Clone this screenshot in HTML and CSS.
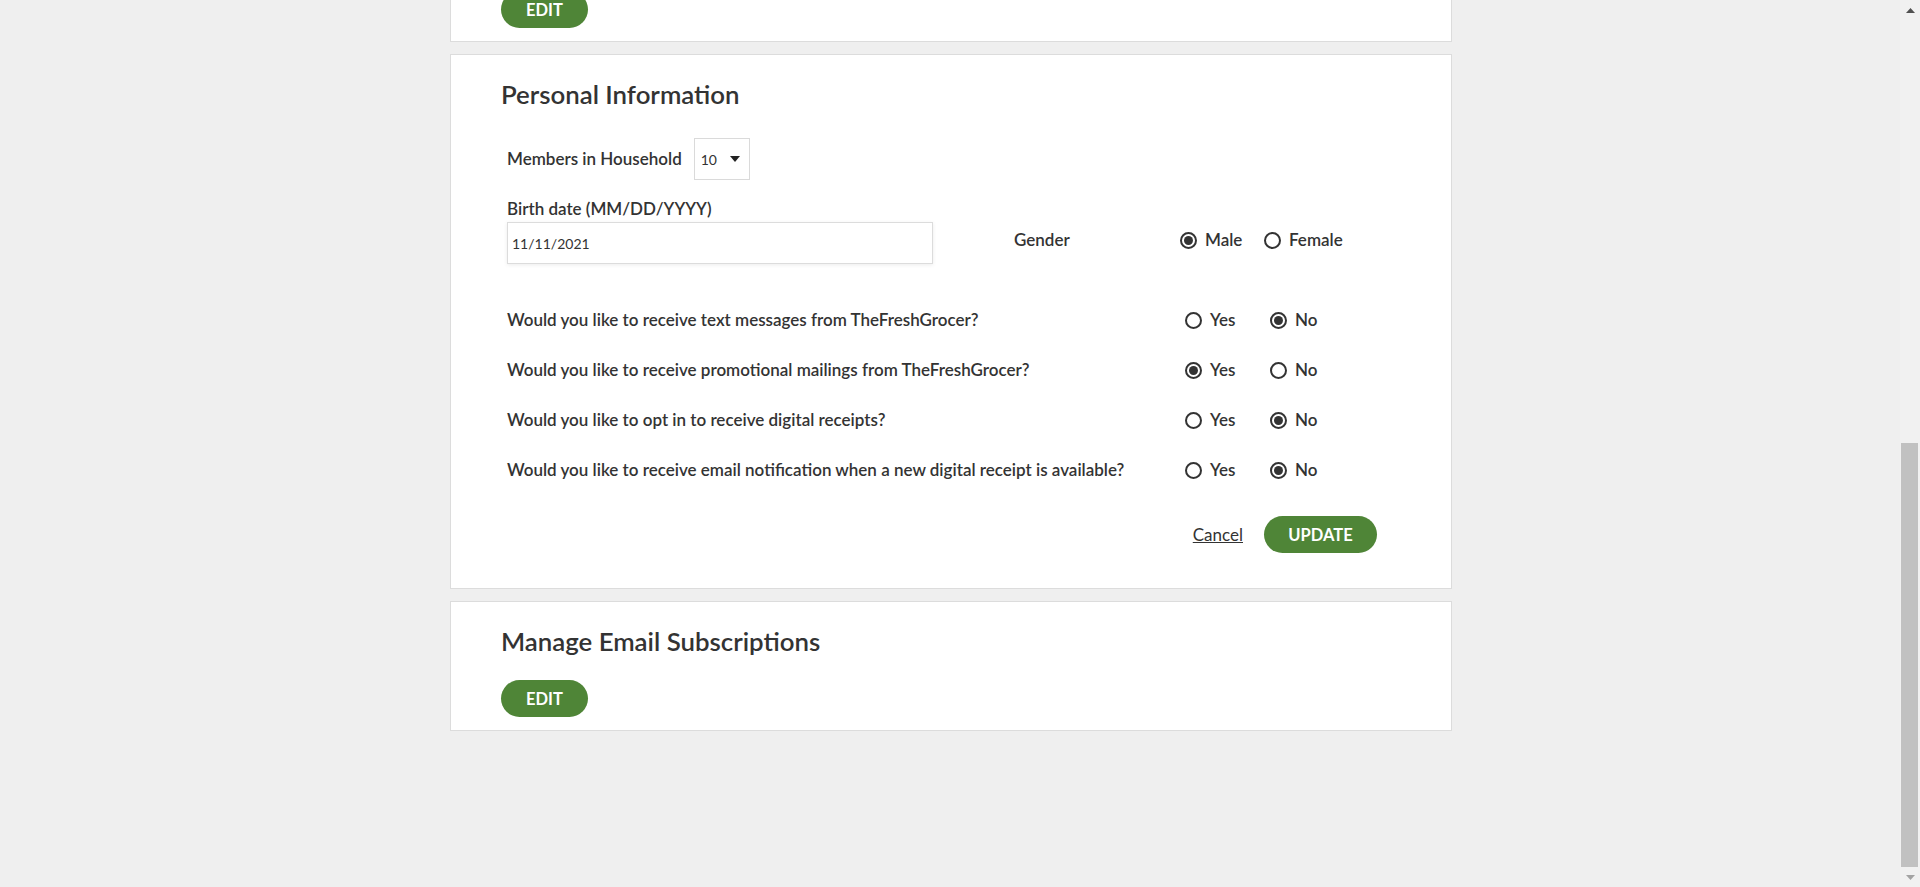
FILE: index.html
```html
<!DOCTYPE html>
<html lang="en">
<head>
<meta charset="utf-8">
<title>Account - Personal Information</title>
<link rel="stylesheet" href="styles.css">
</head>
<body>
<div class="screen">
  <main class="page">
    <section class="card card--clipped">
      <button class="btn btn--edit" type="button">EDIT</button>
    </section>

    <section class="card card--form">
      <h2 class="card-title">Personal Information</h2>
      <form class="form">
        <div class="household">
          <span class="field-label">Members in Household</span>
          <div class="select">
            <span class="select-value">10</span>
            <svg class="select-caret" width="10" height="6" viewBox="0 0 10 6"><path d="M0 0H10L5 6Z" fill="#222"/></svg>
          </div>
        </div>

        <div class="birth-row">
          <div class="birth-field">
            <span class="field-label">Birth date (MM/DD/YYYY)</span>
            <div class="text-input">11/11/2021</div>
          </div>
          <div class="gender">
            <span class="field-label gender-label">Gender</span>
            <span class="radio-option radio-option--gender"><span class="radio is-checked"></span>Male</span>
            <span class="radio-option radio-option--gender"><span class="radio"></span>Female</span>
          </div>
        </div>

        <div class="questions">
          <div class="question">
            <span class="field-label question-text">Would you like to receive text messages from TheFreshGrocer?</span>
            <span class="radio-option"><span class="radio"></span>Yes</span>
            <span class="radio-option"><span class="radio is-checked"></span>No</span>
          </div>
          <div class="question">
            <span class="field-label question-text">Would you like to receive promotional mailings from TheFreshGrocer?</span>
            <span class="radio-option"><span class="radio is-checked"></span>Yes</span>
            <span class="radio-option"><span class="radio"></span>No</span>
          </div>
          <div class="question">
            <span class="field-label question-text">Would you like to opt in to receive digital receipts?</span>
            <span class="radio-option"><span class="radio"></span>Yes</span>
            <span class="radio-option"><span class="radio is-checked"></span>No</span>
          </div>
          <div class="question">
            <span class="field-label question-text">Would you like to receive email notification when a new digital receipt is available?</span>
            <span class="radio-option"><span class="radio"></span>Yes</span>
            <span class="radio-option"><span class="radio is-checked"></span>No</span>
          </div>
        </div>

        <div class="actions">
          <a class="cancel-link" href="#">Cancel</a>
          <button class="btn btn--update" type="button">UPDATE</button>
        </div>
      </form>
    </section>

    <section class="card">
      <h2 class="card-title">Manage Email Subscriptions</h2>
      <button class="btn btn--edit btn--after-title" type="button">EDIT</button>
    </section>
  </main>

  <div class="scrollbar">
    <div class="scroll-btn">
      <svg width="9" height="5" viewBox="0 0 9 5"><path d="M0 5L4.5 0L9 5Z" fill="#505050"/></svg>
    </div>
    <div class="scroll-track">
      <div class="scroll-thumb"></div>
    </div>
    <div class="scroll-btn">
      <svg width="9" height="5" viewBox="0 0 9 5"><path d="M0 0H9L4.5 5Z" fill="#a3a3a3"/></svg>
    </div>
  </div>
</div>
</body>
</html>
```

FILE: styles.css
```css
html, body {
  margin: 0;
  padding: 0;
}

body {
  font-family: "Lato", "Noto Sans", sans-serif;
  color: #333;
  background: #efefef;
}

.screen {
  display: flex;
  height: 100vh;
  overflow: hidden;
  background: #efefef;
}

.page {
  flex: 1;
  display: flex;
  flex-direction: column;
  align-items: center;
  gap: 12px;
  padding-left: 2px;
}

.card {
  flex-shrink: 0;
  box-sizing: border-box;
  width: 1002px;
  background: #fff;
  border: 1px solid #dcdcdc;
  padding: 0 50px 13px;
}

.card--clipped {
  margin-top: -10px;
}

.card-title {
  margin: 0;
  padding-top: 24px;
  font-size: 25.8px;
  line-height: 30px;
  font-weight: 600;
  color: #333;
}

.btn {
  display: block;
  box-sizing: border-box;
  height: 37px;
  border: 0;
  border-radius: 19px;
  background: #4f8537;
  color: #fff;
  font-family: "Lato", "Noto Sans", sans-serif;
  font-size: 16.5px;
  font-weight: 700;
  padding: 0;
  cursor: pointer;
}

.btn--edit {
  width: 87px;
}

.btn--update {
  width: 113px;
}

.btn--after-title {
  margin-top: 24px;
}

.form {
  margin: 29px 0 0 6px;
}

.field-label {
  font-size: 17px;
  line-height: 20px;
  font-weight: 600;
  color: #333;
}

.household {
  display: flex;
  align-items: center;
  gap: 12px;
}

.select {
  box-sizing: border-box;
  width: 56px;
  height: 42px;
  border: 1px solid #dadada;
  display: flex;
  align-items: center;
  padding-left: 6px;
  gap: 13px;
}

.select-value {
  font-size: 14px;
  color: #333;
}

.birth-row {
  margin-top: 19px;
  display: flex;
  align-items: flex-end;
}

.birth-field {
  display: flex;
  flex-direction: column;
  gap: 3px;
}

.text-input {
  box-sizing: border-box;
  width: 426px;
  height: 42px;
  border: 1px solid #dcdcdc;
  box-shadow: 0 1px 4px rgba(0, 0, 0, 0.08);
  padding-left: 4px;
  display: flex;
  align-items: center;
  font-size: 14px;
  color: #333;
}

.gender {
  display: flex;
  align-items: center;
  height: 42px;
  margin-bottom: 3px;
  margin-left: 81px;
}

.gender-label {
  width: 166px;
}

.radio-option {
  display: flex;
  align-items: center;
  gap: 8px;
  font-size: 17px;
  line-height: 20px;
  font-weight: 600;
  color: #333;
}

.radio-option--gender {
  width: 84px;
}

.radio {
  box-sizing: border-box;
  width: 17px;
  height: 17px;
  border: 2px solid #333;
  border-radius: 50%;
  display: flex;
  align-items: center;
  justify-content: center;
  flex-shrink: 0;
}

.radio.is-checked::after {
  content: "";
  width: 9px;
  height: 9px;
  border-radius: 50%;
  background: #333;
}

.questions {
  margin-top: 46px;
  display: flex;
  flex-direction: column;
  gap: 30px;
}

.question {
  display: grid;
  grid-template-columns: 678px 85px auto;
  align-items: center;
}

.actions {
  margin: 36px 24px 22px 0;
  display: flex;
  justify-content: flex-end;
  align-items: center;
  gap: 21px;
}

.cancel-link {
  font-size: 17px;
  color: #333;
  text-decoration: underline;
}

.scrollbar {
  width: 20px;
  flex-shrink: 0;
  background: #f1f1f1;
  display: flex;
  flex-direction: column;
}

.scroll-btn {
  height: 20px;
  display: flex;
  align-items: center;
  justify-content: center;
}

.scroll-track {
  flex: 1;
  display: flex;
  flex-direction: column;
  justify-content: flex-end;
}

.scroll-thumb {
  height: 424px;
  margin: 0 2px 0 1px;
  background: #c1c1c1;
}
```
